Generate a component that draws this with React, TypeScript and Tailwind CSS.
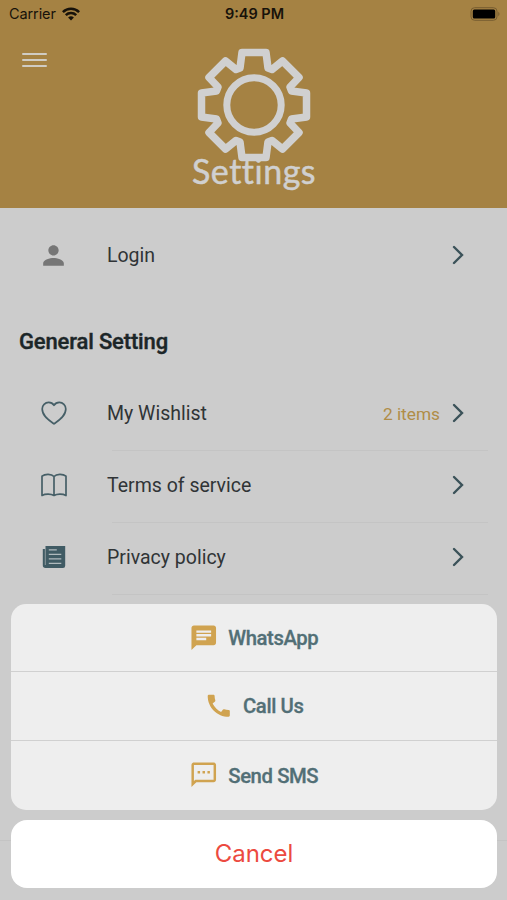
import type {ReactNode} from 'react';
import {MdCall, MdChat, MdOutlineSms, MdPerson} from 'react-icons/md';

type SettingRow = {
  label: string;
  icon: ReactNode;
  value?: string;
};

const settings: SettingRow[] = [
  {label: 'My Wishlist', icon: <HeartIcon />, value: '2 items'},
  {label: 'Terms of service', icon: <BookIcon />},
  {label: 'Privacy policy', icon: <PaperIcon />}
];

const contacts = [
  {label: 'WhatsApp', icon: MdChat},
  {label: 'Call Us', icon: MdCall},
  {label: 'Send SMS', icon: MdOutlineSms}
];

export default function App() {
  return (
    <div className="relative h-[900px] w-[507px] overflow-hidden bg-[#cccccc] font-['Roboto',sans-serif]">
      <Header />

      <main>
        <div className="pt-[13px]">
          <Row label="Login" icon={<MdPerson size={31} color="#767676" />} />
        </div>

        <h2 className="mt-[33px] pl-[19px] text-[22px] font-medium leading-[34px] tracking-[-0.15px] text-[#1c2628] [-webkit-text-stroke:0.4px_#1c2628]">
          General Setting
        </h2>

        <div className="mt-5">
          {settings.map((row) => (
            <div key={row.label}>
              <Row {...row} />
              <div className="ml-[112px] mr-[19px] h-px bg-[#c4c4c4]" />
            </div>
          ))}
        </div>
      </main>

      <div className="absolute inset-x-0 top-[840px] h-px bg-[#c4c4c4]" />

      <ActionSheet />
    </div>
  );
}

function Header() {
  return (
    <header className="h-[208px] bg-[#a58243]">
      <div className="grid h-7 grid-cols-3 items-center pl-[9px] pr-[7px] font-['Inter',sans-serif] text-[#17120a]">
        <div className="flex items-center gap-[6px]">
          <span className="text-[14.5px] tracking-[-0.1px]">Carrier</span>
          <WifiIcon />
        </div>
        <span className="whitespace-nowrap text-center text-[14.5px] font-semibold">9:49 PM</span>
        <div className="flex justify-end pb-px">
          <BatteryIcon />
        </div>
      </div>

      <div className="flex h-[180px]">
        <button type="button" aria-label="Menu" className="ml-[22px] mt-[25px] flex h-[14px] w-[25px] flex-col justify-between">
          <span className="h-[2px] w-full rounded-full bg-[#d0ccc3]" />
          <span className="h-[2px] w-full rounded-full bg-[#d0ccc3]" />
          <span className="h-[2px] w-full rounded-full bg-[#d0ccc3]" />
        </button>
        <div className="ml-[137px] flex w-[140px] flex-col items-center">
          <GearIcon />
          <h1 className="-mt-[12px] font-['Lato',sans-serif] text-[34px] leading-[40px] tracking-[0.5px] text-[#d0d0d0] [font-variant-ligatures:none] [-webkit-text-stroke:0.5px_#d0d0d0]">
            Settings
          </h1>
        </div>
      </div>
    </header>
  );
}

function Row({label, icon, value}: SettingRow) {
  return (
    <div className="flex h-[71px] items-center pb-[3px] pl-[37px] pr-[42px]">
      <span className="flex w-[33px] justify-center">{icon}</span>
      <span className="ml-[37px] mt-[2px] flex-1 text-[19.5px] leading-6 text-[#303436]">{label}</span>
      {value ? (
        <span className="mr-[12px] mt-px text-[17.3px] leading-6 text-[#b08d47]">{value}</span>
      ) : null}
      <svg width="13" height="20" viewBox="0 0 13 20" fill="none" stroke="#3b5259" strokeWidth="2.4" strokeLinecap="round">
        <path d="M2 2l8 8-8 8" />
      </svg>
    </div>
  );
}

function ActionSheet() {
  return (
    <div className="absolute inset-x-[10.5px] top-[603.5px]">
      <div className="h-[206px] divide-y divide-[#d0d0d0] overflow-hidden rounded-[15px] bg-[#eeeeee]">
        {contacts.map(({label, icon: Icon}) => (
          <button key={label} type="button" className="flex h-[68.7px] w-full items-center justify-center gap-[10px]">
            <Icon size={29.5} color="#d0a350" />
            <span className="pt-px text-[20.3px] font-medium tracking-[-0.4px] text-[#526f76] [-webkit-text-stroke:0.3px_#526f76]">
              {label}
            </span>
          </button>
        ))}
      </div>
      <button
        type="button"
        className="mt-[10px] h-[68px] w-full rounded-[16px] bg-white pl-px font-['Inter',sans-serif] text-[24px] text-[#ec4a40]"
      >
        Cancel
      </button>
    </div>
  );
}

function GearIcon() {
  return (
    <svg
      className="mt-[18.5px] shrink-0"
      width="116"
      height="116"
      viewBox="-58 -58 116 116"
      fill="none"
      stroke="#d0d0d0"
      strokeWidth="7.5"
      strokeLinejoin="round"
    >
      <path d="M-12-52.5H12L14-37L18-35.5L28.5-44L45-27.5L36-18L37.5-14L52.5-12V12L37.5 14L36 18L45 27.5L28.5 44L18 35.5L14 37L12 52.5H-12L-14 37L-18 35.5L-28.5 44L-45 27.5L-36 18L-37.5 14L-52.5 12V-12L-37.5-14L-36-18L-45-27.5L-28.5-44L-18-35.5L-14-37Z" />
      <circle r="27.2" strokeWidth="7" />
    </svg>
  );
}

function WifiIcon() {
  return (
    <svg width="18" height="14" viewBox="0 0 18 14" fill="none" stroke="#17120a" strokeWidth="2.5">
      <path d="M.9 5.1a11.5 11.5 0 0 1 16.2 0" />
      <path d="M3.8 8.1a7.4 7.4 0 0 1 10.4 0" />
      <path d="M9 13.6l-2.9-3a4.1 4.1 0 0 1 5.8 0z" fill="#17120a" stroke="none" />
    </svg>
  );
}

function BatteryIcon() {
  return (
    <svg width="30" height="14" viewBox="0 0 30 14">
      <rect x="1" y=".7" width="26" height="12.6" rx="3.6" fill="none" stroke="#775d31" />
      <rect x="2.8" y="2.5" width="22.4" height="9" rx="1.5" fill="#000" />
      <path d="M28.3 4.8v4.4c1.6-.8 1.6-3.6 0-4.4z" fill="#775d31" />
    </svg>
  );
}

function HeartIcon() {
  return (
    <svg width="28" height="26" viewBox="0 0 28 26" fill="none" stroke="#465f67" strokeWidth="1.7" strokeLinejoin="round">
      <path d="M14 5.3C12.5 3 10.5 2.4 8.7 2.4 5 2.4 2.2 5.3 2.2 9c0 7 7.1 11.7 11.8 14.9C18.7 20.7 25.8 16 25.8 9c0-3.7-2.8-6.6-6.5-6.6C17.5 2.4 15.5 3 14 5.3z" />
    </svg>
  );
}

function BookIcon() {
  return (
    <svg width="28" height="26" viewBox="0 0 28 26" fill="none" stroke="#465f67" strokeWidth="1.7" strokeLinejoin="round">
      <path d="M14 4.5C11.5 1.7 5 1.7 2 4.2V23.5c3.5-1.9 9-1.7 12 0 3-1.7 8.5-1.9 12 0V4.2C23 1.7 16.5 1.7 14 4.5zM14 4.5v19" />
    </svg>
  );
}

function PaperIcon() {
  return (
    <svg width="24" height="24" viewBox="0 0 24 24">
      <path d="M3.5 1h19.7v19.8a2.2 2.2 0 0 1-2.2 2.2H3.5a2.7 2.7 0 0 1-2.7-2.7V4h2.7z" fill="#405b64" />
      <path d="M3.3 4v16" stroke="#8b999d" strokeWidth="1" />
      <path d="M6.8 4.8h8M6.8 9.3h12.5M6.8 13.9h12.5M6.8 18.4h12.5" stroke="#b0babd" strokeWidth="1.2" />
    </svg>
  );
}
